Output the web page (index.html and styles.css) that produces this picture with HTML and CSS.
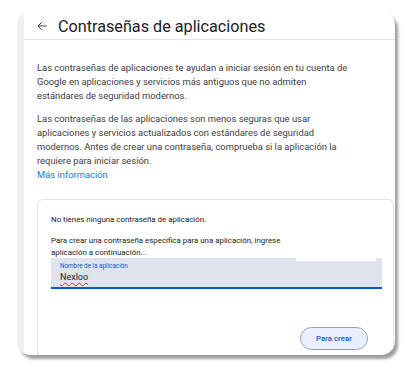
FILE: index.html
```html
<!DOCTYPE html>
<html lang="es">
<head>
<meta charset="utf-8">
<title>Contraseñas de aplicaciones</title>
<link rel="stylesheet" href="styles.css">
</head>
<body>
<div class="frame">
  <div class="strip"></div>
  <div class="main">
    <header class="header">
      <svg class="back" width="10" height="10" viewBox="0 0 10 10"><path d="M9.5 5H1.2M4.8 1.2L1 5l3.8 3.8" fill="none" stroke="#3c4043" stroke-width="1"/></svg>
      <h1 class="title">Contraseñas de aplicaciones</h1>
    </header>
    <div class="content">
      <p class="text">Las contraseñas de aplicaciones te ayudan a iniciar sesión en tu cuenta de Google en aplicaciones y servicios más antiguos que no admiten estándares de seguridad modernos.</p>
      <p class="text second">Las contraseñas de las aplicaciones son menos seguras que usar aplicaciones y servicios actualizados con estándares de seguridad modernos. Antes de crear una contraseña, comprueba si la aplicación la requiere para iniciar sesión.<br><a class="link" href="#">Más información</a></p>
      <section class="panel">
        <p class="small">No tienes ninguna contraseña de aplicación.</p>
        <p class="small second-small">Para crear una contraseña específica para una aplicación, ingrese<br>aplicación a continuación...</p>
        <div class="mask"></div>
        <div class="field">
          <span class="label">Nombre de la aplicación</span>
          <span class="value">Nexloo</span>
        </div>
        <div class="actions">
          <button class="btn">Para crear</button>
        </div>
      </section>
    </div>
  </div>
</div>
</body>
</html>
```
FILE: styles.css
```css
html, body {
  margin: 0;
  padding: 0;
  background: #ffffff;
}
body {
  font-family: Roboto, "Noto Sans", Arial, sans-serif;
  width: 406px;
  height: 378px;
  overflow: hidden;
}
.frame {
  margin: 11px 0 0 17px;
  width: 378px;
  height: 344px;
  border-radius: 14px;
  background: #ffffff;
  box-shadow: 3px 4px 3px rgba(0, 0, 0, 0.38);
  overflow: hidden;
  display: flex;
}
.strip {
  width: 7px;
  background: #f0f0f0;
  flex: none;
}
.main {
  flex: 1;
  display: flex;
  flex-direction: column;
}
.header {
  height: 29px;
  border-bottom: 1px solid #e3e3e3;
  display: flex;
  align-items: center;
  padding-left: 13px;
  box-sizing: border-box;
  gap: 11px;
}
.back {
  flex: none;
  margin-top: 2px;
}
.title {
  margin: 0;
  font-size: 16.2px;
  font-weight: 400;
  color: #202124;
  letter-spacing: 0;
  margin-top: 3px;
}
.content {
  flex: 1;
  display: flex;
  flex-direction: column;
  padding: 21px 0 0 13px;
}
.text {
  margin: 0;
  width: 316px;
  font-size: 9.4px;
  line-height: 14px;
  color: #3c4043;
}
.second {
  margin-top: 9px;
}
.link {
  color: #1a73e8;
  text-decoration: none;
}
.panel {
  position: relative;
  flex: 1;
  margin-top: 17px;
  margin-right: 1px;
  border: 1px solid #e3e3e3;
  border-bottom: none;
  border-radius: 6px 6px 0 0;
  padding: 14px 0 0 13px;
  display: flex;
  flex-direction: column;
}
.small {
  margin: 0;
  font-size: 7.9px;
  line-height: 12px;
  color: #202124;
}
.second-small {
  margin-top: 9px;
}
.mask {
  position: absolute;
  left: 258px;
  top: 57px;
  width: 80px;
  height: 4px;
  background: #ffffff;
}
.field {
  width: 331px;
  height: 31px;
  background: #dfe3eb;
  border-bottom: 2px solid #0b57d0;
  margin-top: -1px;
  display: flex;
  flex-direction: column;
  padding: 4px 0 0 9px;
  box-sizing: border-box;
}
.label {
  font-size: 6.3px;
  line-height: 9px;
  color: #0b57d0;
}
.value {
  font-size: 9px;
  line-height: 13px;
  color: #1f1f1f;
  text-decoration: underline wavy #d93025;
  text-decoration-thickness: 0.6px;
  text-underline-offset: 2px;
  align-self: flex-start;
}
.actions {
  display: flex;
  justify-content: flex-end;
  padding: 38px 25px 0 0;
}
.btn {
  width: 68px;
  height: 23px;
  border: 1px solid #9aa0a6;
  border-radius: 12px;
  background: #e8f0fe;
  color: #1a56c9;
  font-family: Roboto, "Noto Sans", Arial, sans-serif;
  font-size: 7.9px;
  font-weight: 500;
  padding: 0;
}
```
